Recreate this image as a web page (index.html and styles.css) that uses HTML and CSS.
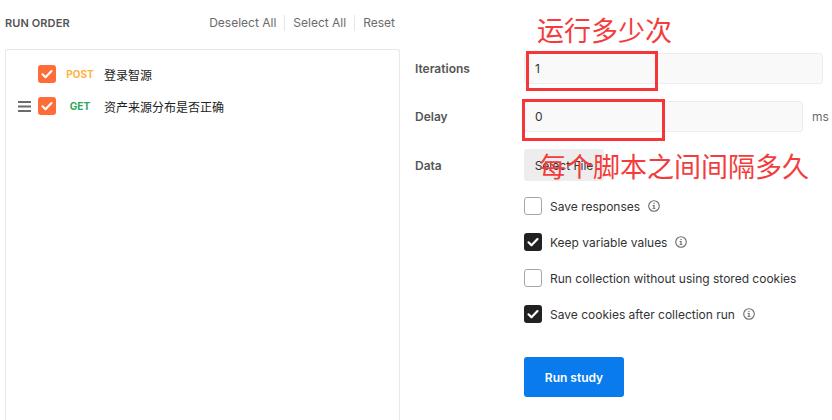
FILE: index.html
```html
<!DOCTYPE html>
<html lang="zh">
<head>
<meta charset="utf-8">
<link rel="stylesheet" href="styles.css">
</head>
<body>
<div class="page">
  <section class="order">
    <header class="order-head">
      <span class="order-title">RUN ORDER</span>
      <nav class="order-actions">
        <span class="act">Deselect All</span>
        <span class="sep"></span>
        <span class="act">Select All</span>
        <span class="sep"></span>
        <span class="act">Reset</span>
      </nav>
    </header>
    <div class="order-box">
      <div class="req">
        <span class="handle"></span>
        <span class="cb cb-orange"><svg viewBox="0 0 18 18"><path d="M4.5 9.3l3 3 6-6.2" fill="none" stroke="#fff" stroke-width="2.2" stroke-linecap="round" stroke-linejoin="round"/></svg></span>
        <span class="method post">POST</span>
        <span class="req-name">登录智源</span>
      </div>
      <div class="req">
        <span class="handle"><svg viewBox="0 0 13 11"><rect x="0" y="0" width="13" height="2" fill="#6b6b6b"/><rect x="0" y="4.5" width="13" height="2" fill="#6b6b6b"/><rect x="0" y="9" width="13" height="2" fill="#6b6b6b"/></svg></span>
        <span class="cb cb-orange"><svg viewBox="0 0 18 18"><path d="M4.5 9.3l3 3 6-6.2" fill="none" stroke="#fff" stroke-width="2.2" stroke-linecap="round" stroke-linejoin="round"/></svg></span>
        <span class="method get">GET</span>
        <span class="req-name">资产来源分布是否正确</span>
      </div>
    </div>
  </section>

  <section class="settings">
    <div class="field">
      <label class="lbl">Iterations</label>
      <div class="input wide">1</div>
    </div>
    <div class="field">
      <label class="lbl">Delay</label>
      <div class="input mid">0</div>
      <span class="unit">ms</span>
    </div>
    <div class="field">
      <label class="lbl">Data</label>
      <span class="filebtn">Select File</span>
    </div>
    <div class="opts">
      <div class="opt"><span class="cb cb-empty"></span><span class="opt-text">Save responses</span><svg class="info" viewBox="0 0 12 12"><circle cx="6" cy="6" r="5.3" fill="none" stroke="#6b6b6b" stroke-width="1.1"/><rect x="5.45" y="5" width="1.1" height="3.6" fill="#6b6b6b"/><rect x="4.6" y="5" width="1.6" height="1" fill="#6b6b6b"/><rect x="4.6" y="7.9" width="2.8" height="0.9" fill="#6b6b6b"/><circle cx="6" cy="3.5" r="0.7" fill="#6b6b6b"/></svg></div>
      <div class="opt"><span class="cb cb-dark"><svg viewBox="0 0 18 18"><path d="M4.5 9.3l3 3 6-6.2" fill="none" stroke="#fff" stroke-width="2.2" stroke-linecap="round" stroke-linejoin="round"/></svg></span><span class="opt-text">Keep variable values</span><svg class="info" viewBox="0 0 12 12"><circle cx="6" cy="6" r="5.3" fill="none" stroke="#6b6b6b" stroke-width="1.1"/><rect x="5.45" y="5" width="1.1" height="3.6" fill="#6b6b6b"/><rect x="4.6" y="5" width="1.6" height="1" fill="#6b6b6b"/><rect x="4.6" y="7.9" width="2.8" height="0.9" fill="#6b6b6b"/><circle cx="6" cy="3.5" r="0.7" fill="#6b6b6b"/></svg></div>
      <div class="opt"><span class="cb cb-empty"></span><span class="opt-text">Run collection without using stored cookies</span></div>
      <div class="opt"><span class="cb cb-dark"><svg viewBox="0 0 18 18"><path d="M4.5 9.3l3 3 6-6.2" fill="none" stroke="#fff" stroke-width="2.2" stroke-linecap="round" stroke-linejoin="round"/></svg></span><span class="opt-text">Save cookies after collection run</span><svg class="info" viewBox="0 0 12 12"><circle cx="6" cy="6" r="5.3" fill="none" stroke="#6b6b6b" stroke-width="1.1"/><rect x="5.45" y="5" width="1.1" height="3.6" fill="#6b6b6b"/><rect x="4.6" y="5" width="1.6" height="1" fill="#6b6b6b"/><rect x="4.6" y="7.9" width="2.8" height="0.9" fill="#6b6b6b"/><circle cx="6" cy="3.5" r="0.7" fill="#6b6b6b"/></svg></div>
    </div>
    <button class="run">Run study</button>

    <div class="note note-1">运行多少次</div>
    <div class="mark mark-1"></div>
    <div class="mark mark-2"></div>
    <div class="note note-2">每个脚本之间间隔多久</div>
  </section>
</div>
</body>
</html>
```

FILE: styles.css
```css
* { box-sizing: border-box; }
html, body { margin: 0; padding: 0; background: #fff; }
body {
  font-family: Inter, "Noto Sans CJK SC", sans-serif;
  color: #333;
  width: 832px;
  height: 420px;
  overflow: hidden;
}
.page { display: flex; height: 420px; }

/* left column */
.order { width: 400px; padding-left: 5px; display: flex; flex-direction: column; }
.order-head {
  height: 49px;
  display: flex;
  align-items: flex-start;
  justify-content: space-between;
  padding-top: 15px;
  padding-right: 5px;
}
.order-title { font-size: 11px; font-weight: 600; color: #555; line-height: 16px; letter-spacing: 0.1px; }
.order-actions { display: flex; align-items: center; gap: 8px; font-size: 12px; color: #6b6b6b; line-height: 16px; }
.sep { width: 1px; height: 16px; background: #e6e6e6; }
.order-box {
  flex: 1;
  border: 1px solid #e8e8e8;
  border-bottom: none;
  border-radius: 3px 3px 0 0;
  padding: 8px 12px 0;
}
.req { height: 32px; display: flex; align-items: center; }
.handle { width: 13px; height: 11px; display: block; margin-right: 7px; }
.handle svg { display: block; width: 13px; height: 11px; }
.cb { width: 18px; height: 18px; border-radius: 3px; display: block; flex: none; }
.cb svg { display: block; width: 18px; height: 18px; }
.cb-orange { background: #ff6c37; }
.cb-dark { background: #212121; }
.cb-empty { border: 1px solid #a6a6a6; background: #fff; }
.method { width: 48px; text-align: center; font-size: 10px; font-weight: 700; }
.post { color: #ffb13d; }
.get { color: #29a85a; }
.req-name { font-size: 12px; color: #212121; font-family: "Noto Sans CJK SC", sans-serif; }

/* right column */
.settings { position: relative; flex: 1; padding: 53px 0 0 15px; }
.field { display: flex; align-items: center; margin-bottom: 17px; }
.field:nth-child(3) { margin-bottom: 16px; }
.lbl { width: 109px; font-size: 12px; font-weight: 600; color: #555; }
.input {
  height: 31px;
  background: #f9f9f9;
  border: 1px solid #ededed;
  border-radius: 3px;
  font-size: 12px;
  color: #333;
  padding-left: 10px;
  line-height: 29px;
}
.wide { width: 299px; }
.mid { width: 279px; }
.unit { margin-left: 9px; font-size: 12px; color: #6b6b6b; }
.filebtn {
  width: 80px;
  height: 32px;
  background: #ededed;
  border-radius: 3px;
  font-size: 12px;
  color: #333;
  display: flex;
  align-items: center;
  justify-content: center;
}
.opts { padding-left: 109px; display: flex; flex-direction: column; gap: 18px; }
.opt { display: flex; align-items: center; height: 18px; font-size: 12px; color: #333; }
.opt-text { margin-left: 8px; }
.info { width: 12px; height: 12px; margin-left: 8px; display: block; }
.run {
  margin: 34px 0 0 109px;
  width: 100px;
  height: 40px;
  border: none;
  border-radius: 3px;
  background: #097bed;
  color: #fff;
  font-family: Inter, sans-serif;
  font-size: 12px;
  font-weight: 600;
  display: block;
}

/* annotation overlays */
.note {
  position: absolute;
  color: #f33d3d;
  font-family: "Noto Sans CJK SC", sans-serif;
  font-size: 27px;
  line-height: 30px;
  white-space: nowrap;
}
.note-1 { left: 137px; top: 15px; }
.note-2 { left: 139px; top: 151px; }
.mark { position: absolute; border: 3px solid #f53636; }
.mark-1 { left: 126px; top: 51px; width: 132px; height: 40px; }
.mark-2 { left: 122px; top: 99px; width: 143px; height: 42px; }
```
